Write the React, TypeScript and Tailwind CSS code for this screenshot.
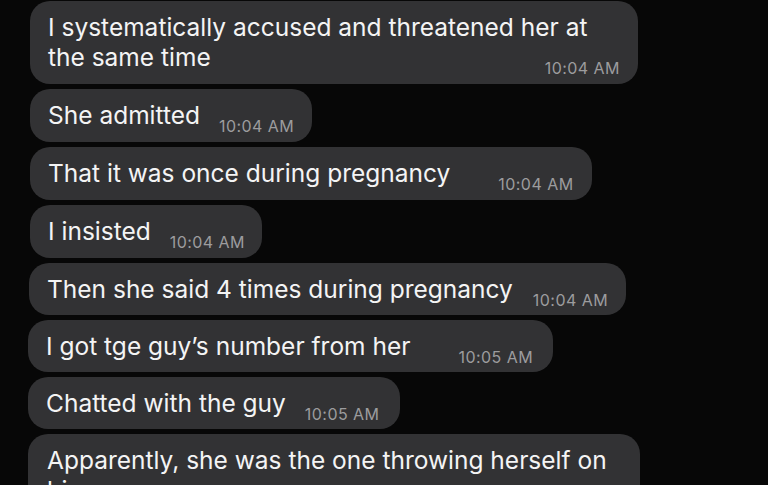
import React from "react";

type Msg = {
  lines: string[];
  time: string;
  wrap: string;
  gap: string;
};

const msgs: Msg[] = [
  {
    lines: ["I systematically accused and threatened her at", "the same time"],
    time: "10:04 AM",
    wrap: "ml-[30px] w-[608px] h-[83px] pb-[12px] pr-[18px]",
    gap: "",
  },
  { lines: ["She admitted"], time: "10:04 AM", wrap: "ml-[30px] pb-[12px] pr-[18px]", gap: "ml-[19px]" },
  { lines: ["That it was once during pregnancy"], time: "10:04 AM", wrap: "ml-[30px] pb-[12px] pr-[18px]", gap: "ml-[48px]" },
  { lines: ["I insisted"], time: "10:04 AM", wrap: "ml-[30px] pb-[12px] pr-[17px]", gap: "ml-[19px]" },
  { lines: ["Then she said 4 times during pregnancy"], time: "10:04 AM", wrap: "ml-[29px] pb-[11px] pr-[18px]", gap: "ml-[20px]" },
  { lines: ["I got tge guy\u2019s number from her"], time: "10:05 AM", wrap: "ml-[28px] pb-[11px] pr-[20px]", gap: "ml-[48px]" },
  { lines: ["Chatted with the guy"], time: "10:05 AM", wrap: "ml-[28px] pb-[11px] pr-[21px]", gap: "ml-[19px]" },
];

function Time({ t, extra }: { t: string; extra: string }) {
  return (
    <span className={`text-[16px] leading-[15px] tracking-[0.45px] text-[#9c9c9e] -mb-[4px] whitespace-nowrap ${extra}`}>
      {t}
    </span>
  );
}

export default function App() {
  return (
    <div
      className="w-[768px] h-[485px] overflow-hidden bg-[#070707] text-[#f4f4f4]"
      style={{ fontFamily: "Inter, 'Liberation Sans', sans-serif" }}
    >
      <div className="flex flex-col items-start gap-[5px] pt-[1px]">
        {msgs.map((m, i) => {
          const last = m.lines[m.lines.length - 1];
          const first = m.lines.slice(0, -1);
          return (
            <div
              key={i}
              className={`bg-[#323234] rounded-[20px] pl-[18px] pt-[11px] text-[24.5px] leading-[30px] ${m.wrap}`}
            >
              {first.map((l, j) => (
                <div key={j} className="whitespace-nowrap">
                  {l}
                </div>
              ))}
              <div className="flex items-end justify-between">
                <span className="whitespace-nowrap">{last}</span>
                <Time t={m.time} extra={m.gap} />
              </div>
            </div>
          );
        })}
        <div className="ml-[28px] w-[612px] bg-[#323234] rounded-[20px] pl-[19px] pr-[19px] pt-[11px] pb-[12px] text-[24.5px] leading-[30px] h-[80px]">
          <div className="whitespace-nowrap">Apparently, she was the one throwing herself on</div>
          <div className="whitespace-nowrap">him</div>
        </div>
      </div>
    </div>
  );
}
